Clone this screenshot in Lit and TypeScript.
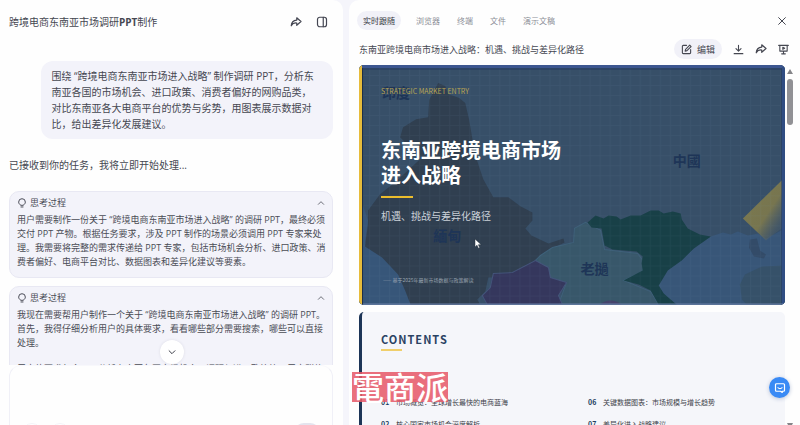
import { LitElement, html, css, svg } from "lit";
import { customElement, property } from "lit/decorators.js";

const icon = (body: unknown, size: number) => html`
  <svg width=${size} height=${size} viewBox="0 0 24 24" fill="none" stroke="currentColor"
    stroke-width="2.4" stroke-linecap="round" stroke-linejoin="round" aria-hidden="true">${body}</svg>`;

const glyph = {
  share: svg`<path d="M13.5 3.5 22 11l-8.500 7.500v-4.500C8.500 13.500 5 15 2.500 19.500 2.800 13 6.500 8.800 13.500 8.200z"/>`,
  panel: svg`<rect x="3" y="2.500" width="18" height="19" rx="4.500"/><path d="M14.500 2.500v19"/>`,
  close: svg`<path d="M4 4l16 16M20 4 4 20"/>`,
  down: svg`<path d="M5 9l7 7 7-7"/>`,
  up: svg`<path d="M4 16l8-8 8 8"/>`,
  bulb: svg`<path d="M8.500 17C5.500 15 4 12.600 4 9.700a8 8 0 0 1 16 0c0 2.900-1.500 5.300-4.500 7.300zM9.500 21.500h5"/>`,
  edit: svg`<path d="M12 3H5a2 2 0 0 0-2 2v14a2 2 0 0 0 2 2h14a2 2 0 0 0 2-2v-7M9 15.500l1-4L19 2.500l3 3-9 9z"/>`,
  download: svg`<path d="M12 3v12M6.500 10l5.500 5.500 5.500-5.500M2.500 21h19"/>`,
  present: svg`<path d="M1.500 3h21M4 3v12.500h16V3M12 15.500V21M8 21.500h8M10.500 7l4 2.300-4 2.300z"/>`,
  chat: svg`<path d="M5 3.500h14a2 2 0 0 1 2 2v11a2 2 0 0 1-2 2h-2.500V21l-3.500-2.500H5a2 2 0 0 1-2-2v-11a2 2 0 0 1 2-2zM8 11.500c2 2.500 6 2.500 8 0"/>`,
};

@customElement("thought-card")
export class ThoughtCard extends LitElement {
  static styles = css`
    :host { display: block; }
    .card { border: 1px solid #e8e8f3; border-radius: 10px; background: #f3f3fa; padding: 0 7px 8px; color: #4a4c55; }
    .head { display: flex; align-items: center; gap: 3px; width: 100%; height: 21px; padding: 0;
      border: 0; background: none; font: inherit; color: #4a4c57; }
    .label { flex: 1; text-align: left; }
    .text { font-size: 9px; line-height: 14px; }
    svg { display: block; }
  `;
  render() {
    return html`<section class="card">
      <button class="head" aria-expanded="true">
        ${icon(glyph.bulb, 10)}<span class="label">思考过程</span>${icon(glyph.up, 8)}
      </button>
      <div class="text"><slot></slot></div>
    </section>`;
  }
}

@customElement("chat-panel")
export class ChatPanel extends LitElement {
  static styles = css`
    :host { display: flex; flex-direction: column; min-width: 0; min-height: 0; background: #fefefe;
      border-radius: 0 10px 0 0; overflow: hidden; font-size: 10px; color: #454751; }
    svg { display: block; }
    p { margin: 0; }
    .bar { display: flex; align-items: center; gap: 14px; flex: none; height: 43px; padding: 0 15px 0 9px; }
    h1 { flex: 1; margin: 0; font-size: 10px; font-weight: 400; }
    h1 b { font-weight: 700; }
    .tool { border: 0; padding: 0; background: none; color: #444652; }
    .thread { position: relative; flex: 1; min-height: 0; overflow: hidden; padding: 18px 10px 0 9px; }
    .ask { width: fit-content; box-sizing: border-box; min-width: 90%; margin-left: auto; padding: 7px 10px; border-radius: 12px;
      background: #f3f3fa; line-height: 16px; white-space: nowrap; }
    .reply { margin: 18px 0; line-height: 16px; }
    thought-card { font-size: 9px; margin-bottom: 8px; white-space: nowrap; }
    .next { margin-top: 12px; }
    .latest { position: absolute; left: 50%; bottom: 1px; translate: -50% 0; display: grid; place-items: center; width: 24px; height: 24px;
      border: 0; border-radius: 50%; background: #fff; color: #3c3e48; box-shadow: 0 0 3px #dcdce6; }
    .composer { flex: none; box-sizing: border-box; height: 60px; overflow: hidden; margin: 0 10px 0 9px; border: 1px solid #f0f0f7;
      border-top-color: #f8f8fc; border-bottom: 0; border-radius: 12px 12px 0 0; background: #fefefe; }
    textarea { display: block; box-sizing: border-box; width: 100%; height: 57px; padding: 10px; border: 0; outline: 0;
      resize: none; background: none; font: inherit; }
    .actions { display: flex; gap: 8px; padding: 0 12px; }
    .round { width: 20px; height: 20px; border: 1px solid #f3f3f8; border-radius: 50%; background: #fff; }
    .send { width: 26px; height: 20px; margin-left: auto; border: 0; border-radius: 10px; background: #e4e4ee; }
  `;
  render() {
    return html`
      <header class="bar">
        <h1>跨境电商东南亚市场调研<b>PPT</b>制作</h1>
        <button class="tool" aria-label="分享">${icon(glyph.share, 12)}</button>
        <button class="tool" aria-label="侧栏">${icon(glyph.panel, 12)}</button>
      </header>
      <div class="thread">
        <p class="ask">围绕 “跨境电商东南亚市场进入战略” 制作调研 PPT，分析东<br>南亚各国的市场机会、进口政策、消费者偏好的网购品类，<br>对比东南亚各大电商平台的优势与劣势，用图表展示数据对<br>比，给出差异化发展建议。</p>
        <p class="reply">已接收到你的任务，我将立即开始处理...</p>
        <thought-card>用户需要制作一份关于 “跨境电商东南亚市场进入战略” 的调研 PPT，最终必须<br>交付 PPT 产物。根据任务要求，涉及 PPT 制作的场景必须调用 PPT 专家来处<br>理。我需要将完整的需求传递给 PPT 专家，包括市场机会分析、进口政策、消<br>费者偏好、电商平台对比、数据图表和差异化建议等要素。</thought-card>
        <thought-card>
          <p>我现在需要帮用户制作一个关于 “跨境电商东南亚市场进入战略” 的调研 PPT。<br>首先，我得仔细分析用户的具体要求，看看哪些部分需要搜索，哪些可以直接<br>处理。</p>
          <p class="next">用户的要求包含了：分析东南亚各国市场机会、调研与进口政策等，用户群体</p>
        </thought-card>
        <button class="latest" aria-label="回到底部">${icon(glyph.down, 10)}</button>
      </div>
      <form class="composer">
        <textarea aria-label="输入消息"></textarea>
        <div class="actions">
          <button class="round" type="button" aria-label="附件"></button>
          <button class="round" type="button" aria-label="工具"></button>
          <button class="send" type="button" aria-label="发送"></button>
        </div>
      </form>`;
  }
}

@customElement("cover-slide")
export class CoverSlide extends LitElement {
  static styles = css`
    :host { display: grid; aspect-ratio: 16 / 9; border-radius: 5px; overflow: hidden; background: #374f68; position: relative;
      font-family: "Noto Sans CJK SC", sans-serif; }
    .map, .copy { grid-area: 1 / 1; min-width: 0; min-height: 0; }
    .map { display: block; width: 100%; height: 100%; }
    .place { font: 700 14px "Noto Sans CJK TC", sans-serif; fill: #1e3557; }
    .copy { z-index: 1; display: flex; flex-direction: column; box-sizing: border-box; padding: 21px 22px; color: #fff; }
    p, h2 { margin: 0; }
    .kicker { font-size: 7px; line-height: 10px; color: #b9a455; }
    h2 { margin-top: 41px; font-size: 20px; line-height: 25px; font-weight: 700; }
    .rule { width: 32px; height: 2px; margin: 9px 0 10px; background: #ecbd2c; }
    .sub { font-size: 10px; line-height: 16px; color: #cbd1d8; }
    .foot { margin-top: auto; font-size: 5px; line-height: 8px; color: #98a3af; padding-left: 2px; }
    .cursor { position: absolute; z-index: 2; left: 27%; top: 72%; }
  `;
  render() {
    return html`
      <svg class="map" viewBox="0 0 425 239" preserveAspectRatio="none" aria-hidden="true">
        <defs>
          <pattern id="grid" width="10" height="10" patternUnits="userSpaceOnUse">
            <path d="M0 .5h10M.5 0v10" stroke="#7fa0b5" stroke-opacity=".07"/>
          </pattern>
          <linearGradient id="gold" x1="0" y1="0" x2="1" y2="1">
            <stop offset="0" stop-color="#7d7a4e"/><stop offset=".58" stop-color="#77754f"/><stop offset=".82" stop-color="#5b6563" stop-opacity=".3"/>
          </linearGradient>
        </defs>
        <rect width="425" height="239" fill="#374f68"/>
        <path d="M0 128L9 155 6 177 23 188 39 205 53 239H0z" fill="#375679"/>
        <path d="M351 171l12-4 8 2 7-3 10 4 10-2 8 5 19-10v76H310l-11-19 9-15 26-22z" fill="#385678"/>
        <path d="M79 18l7 3 3 8 11 4 6 5 4 17 3 18 3 17 8 24 10 18 15 0 12 9 12 6 0 8-7 8 6 7 17 8 15-5 1 4-20 10-9 7-5 5-23 12-19 1-3 14-8 8 5 9H53l-7-18-7-16-16-17-17-11 3-22 0-14 12-16 15-12 26-24-5-14-11-2-5-5 3-10 13-8 12-2 1-17z" fill="#303f50"/>
        <path d="M181 190l12-8 21-5 1-14 11-6 15 8 4 19 33 4 6 8-1 10-19 9 27 11 8 13H199l8-22-16-5-2-10-13-7z" fill="#38576a" stroke="#3e6079"/>
        <path d="M176 195l13 7 2 10 16 5-8 13 4 9h-75l-5-9 8-8 3-14 19-1z" fill="#35375d" stroke="#435379"/>
        <path d="M240 239q11-8 22 0z" fill="#45436b"/>
        <path d="M228 157l8-7 8 3 5-3 8 1 4 3 10-4 10 0 10-5 8 0 5 3 9-2 8 2 1 6 6 9 12 6 11 2-17 12-12 12-14 10-9 15 5 8 13 11h-18l-8-14-12-6-15-4 19-10-1-7 1-7-6-5-24-2-8-4-3-17-10-1z" fill="#184047"/>
        <path d="M390 174l7-1 3 12 6 4-2 4-10-2-5-9z" fill="#334b68"/>
        <path d="M425 200l-23 1-17 8-5 10 2 15 5 5h38z" fill="#365169"/>
        <path d="M383 153l42-41v48l-19 15z" fill="url(#gold)"/>
        <rect width="425" height="239" fill="url(#grid)"/>
        <text class="place" x="23" y="33">印度</text>
        <text class="place" x="74" y="176">緬甸</text>
        <text class="place" x="221" y="208">老撾</text>
        <text class="place" x="313" y="101">中國</text>
        <path d="M0 1.500h425" stroke="#3c5690" stroke-width="3"/>
        <path d="M4 4h418v235" fill="none" stroke="#243b63"/>
        <path d="M423.500 2v237" stroke="#304d83" stroke-width="3"/>
        <path d="M0 238.500h425" stroke="#687fa6"/>
        <path d="M1.500 0v239" stroke="#e7bc3b" stroke-width="3"/>
        <path d="M3.500 3v236" stroke="#20304a"/>
      </svg>
      <div class="copy">
        <p class="kicker">STRATEGIC MARKET ENTRY</p>
        <h2>东南亚跨境电商市场<br>进入战略</h2>
        <div class="rule"></div>
        <p class="sub">机遇、挑战与差异化路径</p>
        <p class="foot">—— 基于2025年最新市场数据与政策解读</p>
      </div>
      <svg class="cursor" width="8" height="11" viewBox="0 0 8 11" aria-hidden="true">
        <path d="M1 1v8l2-1.800L4.400 10.300l1.300-.6-1.300-3H7.200z" fill="#fff" stroke="#26333f" stroke-width=".5"/>
      </svg>`;
  }
}

@customElement("contents-slide")
export class ContentsSlide extends LitElement {
  @property({ attribute: false }) items: string[][] = [];
  static styles = css`
    :host { display: block; box-sizing: border-box; aspect-ratio: 16 / 9; border-left: 3px solid #1d3557; border-radius: 5px;
      background: #f5f6fa; padding: 19px 22px 0 19px; font-family: "Noto Sans CJK SC", sans-serif; }
    h2 { margin: 0; font-size: 11px; line-height: 16px; font-weight: 700; letter-spacing: 1px; color: #2a4263; }
    .rule { width: 21px; height: 2px; margin: 2px 0 46px; background: #f0cf6b; }
    .list { display: grid; grid-template-columns: 1fr 1fr; gap: 12px 32px; margin: 0; padding: 0; list-style: none; }
    .row { display: flex; gap: 6px; font-size: 7px; line-height: 10px; color: #3f434b; white-space: nowrap; }
    .num { width: 9px; font-weight: 700; color: #24405f; }
  `;
  render() {
    return html`<h2>CONTENTS</h2><div class="rule"></div>
      <ol class="list">${this.items.map(([n, t]) => html`<li class="row"><span class="num">${n}</span><span>${t}</span></li>`)}</ol>`;
  }
}

@customElement("preview-panel")
export class PreviewPanel extends LitElement {
  static styles = css`
    :host { display: flex; flex-direction: column; min-width: 0; min-height: 0; background: #fefefe;
      border-radius: 10px 0 0 0; overflow: hidden; color: #454751; }
    svg { display: block; }
    button { font: inherit; color: inherit; border: 0; background: none; padding: 0; }
    .tabs { display: flex; align-items: center; gap: 5px; flex: none; padding: 11px 13px 0 8px; font-size: 8px; }
    .tab { height: 19px; padding: 0 6px; border-radius: 10px; color: #8c8e97; }
    .tab.on { margin-right: 4px; background: #f1f1f8; color: #363842; }
    .close { margin-left: auto; }
    .bar { display: flex; align-items: center; gap: 11px; flex: none; height: 20px; padding: 9px 11px 6px 10px; }
    h1 { flex: 1; margin: 0; font-size: 9px; font-weight: 400; white-space: nowrap; }
    .edit { display: flex; align-items: center; gap: 5px; height: 20px; padding: 0 7px; border-radius: 10px;
      background: #f1f1f8; font-size: 9px; font-weight: 400; }
    .view { display: flex; flex: 1; min-height: 0; gap: 1px; padding: 0 6px 0 10px; overflow: hidden; }
    .deck { display: flex; flex-direction: column; gap: 7px; flex: 1; min-width: 0; }
    cover-slide, contents-slide { flex: none; }
    .scroll { display: flex; flex-direction: column; align-items: center; gap: 5px; width: 8px; padding-top: 4px; color: #858589; }
    .thumb { width: 6px; height: 46px; border-radius: 3px; background: #919195; }
    .end { margin-top: auto; }
  `;
  render() {
    const tabs = ["实时跟随", "浏览器", "终端", "文件", "演示文稿"];
    const items = [["01", "市场概览：全球增长最快的电商蓝海"], ["06", "关键数据图表：市场规模与增长趋势"],
      ["02", "核心国家市场机会深度解析"], ["07", "差异化进入战略建议"]];
    return html`
      <nav class="tabs">
        ${tabs.map((t, i) => html`<button class="tab ${i ? "" : "on"}">${t}</button>`)}
        <button class="close" aria-label="关闭">${icon(glyph.close, 10)}</button>
      </nav>
      <div class="bar">
        <h1>东南亚跨境电商市场进入战略：机遇、挑战与差异化路径</h1>
        <button class="edit">${icon(glyph.edit, 11)}编辑</button>
        <button aria-label="下载">${icon(glyph.download, 11)}</button>
        <button aria-label="分享">${icon(glyph.share, 12)}</button>
        <button aria-label="放映">${icon(glyph.present, 11)}</button>
      </div>
      <div class="view">
        <div class="deck">
          <cover-slide></cover-slide>
          <contents-slide .items=${items}></contents-slide>
        </div>
        <div class="scroll" aria-hidden="true">
          <svg width="6" height="5" viewBox="0 0 6 5"><path d="M3 0l3 5H0z" fill="currentColor"/></svg>
          <div class="thumb"></div>
          <svg class="end" width="6" height="2" viewBox="0 0 6 2"><path d="M0 0h6L5 2H1z" fill="currentColor"/></svg>
        </div>
      </div>`;
  }
}

@customElement("app-root")
export class AppRoot extends LitElement {
  static styles = css`
    :host { position: relative; display: grid; grid-template-columns: 343fr 451fr; grid-template-rows: minmax(0, 1fr);
      gap: 6px; height: 100vh; overflow: hidden; background: #f5f5fb;
      font-family: "Open Sans", "Noto Sans CJK SC", sans-serif; }
    .mark { position: absolute; left: 44%; bottom: 23px; width: 96px; height: 30px; background: #e75a69dd;
      color: #fff; font: 500 32px/28px "Noto Sans CJK TC", sans-serif; text-align: center; }
    .help { position: absolute; right: 10px; bottom: 27px; display: grid; place-items: center; width: 21px; height: 21px;
      padding: 0; border: 0; border-radius: 50%; background: #398af5; color: #fff; box-shadow: 0 1px 4px #b9c4da; }
  `;
  render() {
    return html`<chat-panel></chat-panel><preview-panel></preview-panel>
      <div class="mark">電商派</div>
      <button class="help" aria-label="客服">${icon(glyph.chat, 12)}</button>`;
  }
}
